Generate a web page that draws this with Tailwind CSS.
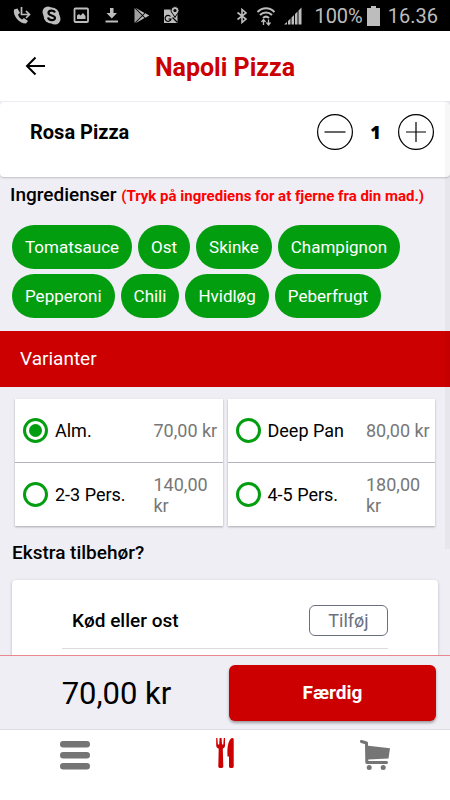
<!DOCTYPE html>
<html lang="da">
<head>
  <meta charset="UTF-8" />
  <meta name="viewport" content="width=device-width, initial-scale=1" />
  <title>Napoli Pizza</title>
  <script src="https://cdn.jsdelivr.net/npm/@tailwindcss/browser@4"></script>
</head>
<body class="h-screen flex flex-col overflow-hidden bg-[#efeef5] text-black font-['Roboto',sans-serif]">

  <!-- Status bar -->
  <div class="h-[31px] shrink-0 bg-black text-[#bdbdbd] flex items-center justify-between pl-3 pr-3">
    <div class="flex items-center gap-[11px]">
      <svg class="w-[19px] h-[19px]" viewBox="0 0 19 19" fill="none" stroke="currentColor">
        <path d="M2 3.500c-1.500 6 5 14 12 14l2-2.500-4-3-2 1.500c-2-1-3.500-3-4-5l2-1.500-2.500-4.500z" fill="currentColor" stroke="none" />
        <path d="M9.500 1v7.500H17M14 5 17.500 8.500 14 12" stroke-width="1.700" />
      </svg>
      <svg class="w-[19px] h-[19px]" viewBox="0 0 19 19">
        <circle cx="9.500" cy="9.500" r="8" fill="currentColor" />
        <circle cx="6" cy="6" r="5.500" fill="currentColor" />
        <circle cx="13" cy="13" r="5.500" fill="currentColor" />
        <path d="M13 6.500C12 4 6.500 4 6.500 7s6.500 2 6.500 5-6 3-7-.5" fill="none" stroke="#000" stroke-width="2.200" />
      </svg>
      <svg class="w-[19px] h-[19px]" viewBox="0 0 19 19">
        <rect x="2.500" y="2.500" width="13.500" height="13.500" rx="1" fill="none" stroke="currentColor" stroke-width="1.800" />
        <path d="M5 13V9.500l2-1.500 1.500 1.500L11 7l2.500 3v3z" fill="currentColor" />
      </svg>
      <svg class="w-[19px] h-[19px]" viewBox="0 0 19 19" fill="currentColor">
        <path d="M8 2h3.500v5H15l-5.200 5.500L4.500 7H8zM3.500 14.500h12.500v2H3.500z" />
      </svg>
      <svg class="w-[19px] h-[19px]" viewBox="0 0 19 19" fill="currentColor">
        <path d="M2.500 2v15L10 9.500z" opacity=".85" />
        <path d="M3.500 1.800 10.500 8.800 12.500 7zM3.500 17.200 10.500 10.200 12.500 12zM13.300 7.300l4 2.200-4 2.200-2.200-2.200z" />
      </svg>
      <svg class="w-[19px] h-[19px]" viewBox="0 0 19 19">
        <path d="M2 3.500h13.500v13.500H2z" fill="currentColor" />
        <path d="M8.500 10.500A3 3 0 1 0 9 13H6.500M10.500 11.500l5 5" fill="none" stroke="#000" stroke-width="1.200" />
        <path d="M13 .5a4 4 0 0 1 4 4c0 2-2 3-4 7-2-4-4-5-4-7a4 4 0 0 1 4-4z" fill="currentColor" stroke="#000" />
        <circle cx="13" cy="4.500" r="1.600" fill="#000" />
      </svg>
    </div>
    <div class="flex items-center gap-1">
      <svg class="w-3 h-4 mr-1" viewBox="0 0 12 16" fill="none" stroke="currentColor" stroke-width="1.600">
        <path d="M1.500 4.500 10 11l-4 3.500v-13L10 5l-8.500 6.500" />
      </svg>
      <svg class="w-5 h-5 mr-1" viewBox="0 0 20 20" fill="none" stroke="currentColor" stroke-width="2">
        <path d="M1.500 6c5-5 12-5 17 0M4 9c3.500-3.500 8.500-3.500 12 0M7 12c2-1.800 4-1.800 6 0" />
        <path d="M7.500 19v-5M5.500 16l2-2.500 2 2.500M12.500 13.500v5M10.500 16.500l2 2.500 2-2.500" stroke-width="1.300" />
      </svg>
      <svg class="w-[18px] h-[18px] mr-2" viewBox="0 0 18 18" fill="currentColor">
        <path d="M0 17.500h3V15zM4 17.500h2.500v-6L4 14zM7.500 17.500H10V8L7.500 10.500zM11 17.500h2.500v-13L11 7zM14.500 17.500H17.500V.5l-3 3z" />
      </svg>
      <span class="text-[20px] leading-6 pt-px">100%</span>
      <svg class="w-[13px] h-5 mr-1" viewBox="0 0 13 20" fill="currentColor">
        <path d="M4 0h5v2h4v18H0V2h4z" />
      </svg>
      <span class="text-[20px] leading-6 pt-px">16.36</span>
    </div>
  </div>

  <!-- Header -->
  <header class="h-[70px] shrink-0 bg-white grid grid-cols-[1fr_auto_1fr] items-center px-6">
    <button type="button" aria-label="Tilbage" class="justify-self-start">
      <svg class="w-[22px] h-[22px]" viewBox="0 0 22 22" fill="none" stroke="currentColor" stroke-width="2">
        <path d="M21 11H3M11.500 2.500 3 11l8.500 8.500" />
      </svg>
    </button>
    <h1 class="text-[25px] leading-8 font-bold text-[#cc0000] pt-1">Napoli Pizza</h1>
  </header>

  <main class="relative flex-1 min-h-0 overflow-hidden pt-px">
    <!-- Scroll indicator -->
    <div class="absolute right-0 top-0 w-[5px] h-[448px] bg-black/3"></div>

    <section class="h-[75px] bg-white rounded-sm shadow-[0_1px_2px_rgba(0,0,0,0.2)] flex items-start justify-between pl-[30px] pr-4 pt-3">
      <h2 class="text-[20px] leading-9 font-bold">Rosa Pizza</h2>
      <div class="flex items-center">
        <button type="button" aria-label="Færre">
          <svg class="w-9 h-9" viewBox="0 0 36 36" fill="none" stroke="currentColor" stroke-width="1.200">
            <circle cx="18" cy="18" r="17.400" /><path d="M7.500 18h21" />
          </svg>
        </button>
        <span class="w-[45px] text-center text-[18px] leading-9 font-extrabold font-['Open_Sans',sans-serif]">1</span>
        <button type="button" aria-label="Flere">
          <svg class="w-9 h-9" viewBox="0 0 36 36" fill="none" stroke="currentColor" stroke-width="1.200">
            <circle cx="18" cy="18" r="17.400" /><path d="M8 18h20M18 8v20" />
          </svg>
        </button>
      </div>
    </section>

    <section>
      <h3 class="pl-[10px] pt-[6px] text-[19px] leading-6 font-medium whitespace-nowrap">Ingredienser <span class="text-[15px] font-bold text-[#ff0000]">(Tryk på ingrediens for at fjerne fra din mad.)</span></h3>
      <div class="flex flex-wrap gap-x-[6px] gap-y-[5px] px-3 pt-[17px] pb-[13px] text-white text-[17px] leading-6">
        <button type="button" class="h-11 px-[13px] rounded-[22px] bg-[#039e10]">Tomatsauce</button>
        <button type="button" class="h-11 px-[13px] rounded-[22px] bg-[#039e10]">Ost</button>
        <button type="button" class="h-11 px-[13px] rounded-[22px] bg-[#039e10]">Skinke</button>
        <button type="button" class="h-11 px-[13px] rounded-[22px] bg-[#039e10]">Champignon</button>
        <button type="button" class="h-11 px-[13px] rounded-[22px] bg-[#039e10]">Pepperoni</button>
        <button type="button" class="h-11 px-[13px] rounded-[22px] bg-[#039e10]">Chili</button>
        <button type="button" class="h-11 px-[13px] rounded-[22px] bg-[#039e10]">Hvidløg</button>
        <button type="button" class="h-11 px-[13px] rounded-[22px] bg-[#039e10]">Peberfrugt</button>
      </div>
    </section>

    <h3 class="h-14 px-5 bg-[#cc0000] text-white text-[19px] leading-[56px]">Varianter</h3>

    <!-- Variants -->
    <div class="grid grid-cols-2 gap-x-[5px] pl-[15px] pr-[15px] pt-3 text-[18px] leading-[21px]">
      <div class="bg-white shadow-[0_1px_2px_rgba(0,0,0,0.3)]">
        <label class="h-16 flex items-center pl-2 pr-[5px] border-b border-[#b4b3bc]">
          <input type="radio" name="variant" checked class="appearance-none w-[25px] h-[25px] mr-[7px] shrink-0 rounded-full border-[3px] border-[#039e10] p-[3px] bg-clip-content checked:bg-[#039e10]" />
          <span class="flex-1">Alm.</span>
          <span class="w-16 text-[#777777]">70,00 kr</span>
        </label>
        <label class="h-[63px] flex items-center pl-2 pr-[5px]">
          <input type="radio" name="variant" class="appearance-none w-[25px] h-[25px] mr-[7px] shrink-0 rounded-full border-[3px] border-[#039e10] p-[3px] bg-clip-content checked:bg-[#039e10]" />
          <span class="flex-1">2-3 Pers.</span>
          <span class="w-16 text-[#777777]">140,00 kr</span>
        </label>
      </div>
      <div class="bg-white shadow-[0_1px_2px_rgba(0,0,0,0.3)]">
        <label class="h-16 flex items-center pl-2 pr-[5px] border-b border-[#b4b3bc]">
          <input type="radio" name="variant" class="appearance-none w-[25px] h-[25px] mr-[7px] shrink-0 rounded-full border-[3px] border-[#039e10] p-[3px] bg-clip-content checked:bg-[#039e10]" />
          <span class="flex-1">Deep Pan</span>
          <span class="w-16 text-[#777777]">80,00 kr</span>
        </label>
        <label class="h-[63px] flex items-center pl-2 pr-[5px]">
          <input type="radio" name="variant" class="appearance-none w-[25px] h-[25px] mr-[7px] shrink-0 rounded-full border-[3px] border-[#039e10] p-[3px] bg-clip-content checked:bg-[#039e10]" />
          <span class="flex-1">4-5 Pers.</span>
          <span class="w-16 text-[#777777]">180,00 kr</span>
        </label>
      </div>
    </div>

    <h3 class="pl-3 pt-[15px] text-[19px] leading-6 font-medium">Ekstra tilbehør?</h3>
    <section class="mt-[15px] mx-3 h-40 bg-white rounded-sm shadow-[0_1px_3px_rgba(0,0,0,0.25)] px-[50px] pt-[25px]">
      <div class="flex items-center justify-between pl-[10px] pb-3 border-b border-[#dcdcdc]">
        <h4 class="text-[19px] leading-6 font-medium">Kød eller ost</h4>
        <button type="button" class="w-[79px] h-[31px] rounded-md border border-[#6b7080] text-[18px] leading-6 text-[#6b7080]">Tilføj</button>
      </div>
    </section>
  </main>

  <!-- Total -->
  <div class="relative h-[74px] shrink-0 bg-[#efeef5] border-t border-[#e8888e] grid grid-cols-2 items-center pl-[10px] pr-[14px]">
    <p class="text-center text-[31px] leading-9 pt-[2px]">70,00 kr</p>
    <button type="button" class="ml-[6px] h-14 rounded-md bg-[#cc0000] text-white text-[19px] leading-6 font-bold shadow-[0_2px_3px_rgba(0,0,0,0.35)]">Færdig</button>
  </div>

  <!-- Tab bar -->
  <nav class="relative h-[71px] shrink-0 bg-white border-t border-[#dddde3] grid grid-cols-3 text-[#757575]">
    <a href="#menu" aria-label="Menu" class="flex justify-center pt-[11px]">
      <svg class="w-[30px] h-[29px]" viewBox="0 0 30 29" fill="currentColor">
        <rect width="30" height="6.500" rx="3.200" /><rect y="11" width="30" height="6.500" rx="3.200" /><rect y="22" width="30" height="6.500" rx="3.200" />
      </svg>
    </a>
    <a href="#mad" aria-label="Mad" class="flex justify-center pt-2 text-[#cc0000]">
      <svg class="w-[18px] h-[30px]" viewBox="0 0 18 30" fill="currentColor">
        <path d="M.2 0h1.200l.5 6.500h1.300L3.600 0h2l.4 6.500h1.300L7.800 0H9v7.500c0 1.500-.9 2.500-2.200 3.200L7.300 28.500c0 2-5 2-5 0l.4-17.800C1 10 .3 9 .2 7.500z" />
        <path d="M17.700 1.500v27c0 2-4.700 2-4.700 0V18.500h-1.500c-.5-8 .5-15.500 3.500-18 1.500-1 2.700-.5 2.700 1z" />
      </svg>
    </a>
    <a href="#kurv" aria-label="Kurv" class="flex justify-center pt-[10px]">
      <svg class="w-[30px] h-[30px]" viewBox="0 0 30 30" fill="currentColor">
        <path d="M1.500 1.500 6.500 3l.3 19.500H26.500" fill="none" stroke="currentColor" stroke-width="3" stroke-linecap="round" stroke-linejoin="round" />
        <path d="M6 5.500 30 8.200 28.500 18.500 8 19.500v1.500H6z" />
        <circle cx="9.200" cy="27.500" r="2.500" /><circle cx="23.200" cy="27.500" r="2.500" />
      </svg>
    </a>
  </nav>
</body>
</html>
